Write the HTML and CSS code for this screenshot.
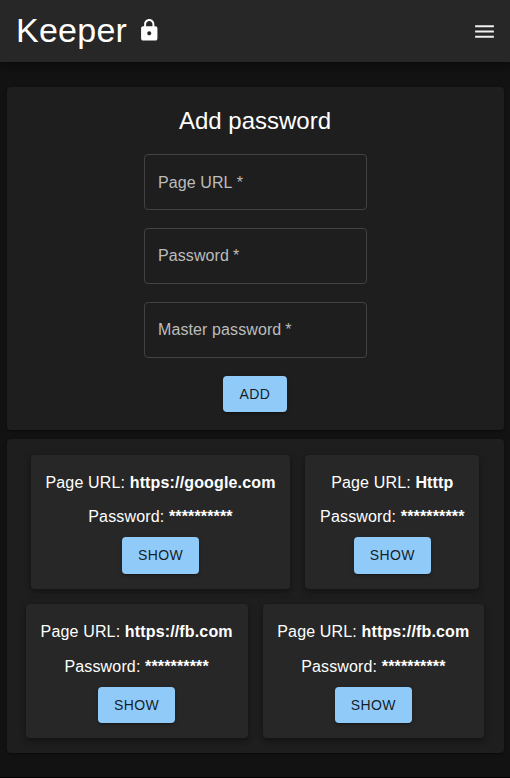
FILE: index.html
```html
<!DOCTYPE html>
<html lang="en">
<head>
<meta charset="utf-8">
<title>Keeper</title>
<link rel="stylesheet" href="styles.css">
</head>
<body>
<header class="bar">
  <h1 class="brand">Keeper</h1>
  <svg class="lock" viewBox="0 0 24 24"><path d="M18 8h-1V6c0-2.760-2.240-5-5-5S7 3.240 7 6v2H6c-1.100 0-2 .9-2 2v10c0 1.100.9 2 2 2h12c1.100 0 2-.9 2-2V10c0-1.100-.9-2-2-2zm-6 9c-1.100 0-2-.9-2-2s.9-2 2-2 2 .9 2 2-.9 2-2 2zm3.100-9H8.900V6c0-1.710 1.390-3.100 3.100-3.100s3.100 1.390 3.100 3.100v2z"/></svg>
  <svg class="menu" viewBox="0 0 24 24"><path d="M3 18h18v-2H3v2zm0-5h18v-2H3v2zm0-7v2h18V6H3z"/></svg>
</header>
<main>
  <section class="panel form">
    <h2 class="heading">Add password</h2>
    <label class="field">Page URL<span class="star">*</span></label>
    <label class="field">Password<span class="star">*</span></label>
    <label class="field">Master password<span class="star">*</span></label>
    <button class="btn">Add</button>
  </section>
  <section class="panel list">
    <article class="card">
      <p class="url">Page URL: <b>https://google.com</b></p>
      <p class="pass">Password: <b>**********</b></p>
      <button class="btn">Show</button>
    </article>
    <article class="card">
      <p class="url">Page URL: <b>Htttp</b></p>
      <p class="pass">Password: <b>**********</b></p>
      <button class="btn">Show</button>
    </article>
    <article class="card">
      <p class="url">Page URL: <b>https://fb.com</b></p>
      <p class="pass">Password: <b>**********</b></p>
      <button class="btn">Show</button>
    </article>
    <article class="card">
      <p class="url">Page URL: <b>https://fb.com</b></p>
      <p class="pass">Password: <b>**********</b></p>
      <button class="btn">Show</button>
    </article>
  </section>
</main>
</body>
</html>
```

FILE: styles.css
```css
* { box-sizing: border-box; }
body {
  margin: 0;
  height: 778px;
  overflow: hidden;
  background: #121212;
  border-bottom: 1px solid #000;
  color: #fff;
  font: 400 16px/24px "Liberation Sans", Arial, sans-serif;
  letter-spacing: 0.15px;
}
h1, h2, p { margin: 0; font-weight: 400; }
.bar {
  display: flex;
  align-items: center;
  height: 62px;
  padding: 0 13px 0 16px;
  background: #272727;
  box-shadow: 0 2px 4px -1px rgba(0,0,0,.2), 0 4px 5px rgba(0,0,0,.14), 0 1px 10px rgba(0,0,0,.12);
}
.brand { margin-bottom: 2px; font-size: 34px; line-height: 42px; letter-spacing: 0.25px; }
.lock { width: 24.500px; height: 24.500px; margin: 0 0 1px 9.500px; fill: #fff; }
.menu { width: 25px; height: 25px; margin-left: auto; fill: #f0f0f0; }
main {
  display: flex;
  flex-direction: column;
  gap: 9px;
  padding: 24.500px 6.500px 0;
}
.panel {
  border-radius: 4px;
  background: #1e1e1e;
  box-shadow: 0 2px 1px -1px rgba(0,0,0,.2), 0 1px 1px rgba(0,0,0,.14), 0 1px 3px rgba(0,0,0,.12);
}
.form {
  display: flex;
  flex-direction: column;
  align-items: center;
  height: 343.500px;
  padding-top: 18px;
}
.heading { margin-bottom: 17.400px; font-size: 24px; line-height: 32px; letter-spacing: 0; }
.field {
  display: flex;
  align-items: center;
  gap: 4px;
  width: 223px;
  height: 56px;
  margin-bottom: 17.900px;
  padding: 1.400px 13.500px 0;
  border: 1px solid #424242;
  border-radius: 4px;
  color: #bcbcbc;
  letter-spacing: 0.1px;
}
.btn {
  min-width: 64px;
  height: 36.500px;
  padding: 6px 16px;
  border: 0;
  border-radius: 4px;
  background: #90caf9;
  color: rgba(0,0,0,.87);
  font: 400 14px/24.500px "Liberation Sans", Arial, sans-serif;
  letter-spacing: 0.4px;
  text-transform: uppercase;
  box-shadow: 0 3px 1px -2px rgba(0,0,0,.2), 0 2px 2px rgba(0,0,0,.14), 0 1px 5px rgba(0,0,0,.12);
}
.list {
  display: flex;
  flex-wrap: wrap;
  justify-content: center;
  align-content: flex-start;
  gap: 15.500px 15px;
  height: 313.500px;
  padding-top: 15.500px;
}
.card {
  display: flex;
  flex-direction: column;
  align-items: center;
  height: 134px;
  padding: 16px 14.800px 0;
  border-radius: 4px;
  background: #272727;
  box-shadow: 0 2px 4px -1px rgba(0,0,0,.2), 0 4px 5px rgba(0,0,0,.14), 0 1px 10px rgba(0,0,0,.12);
}
.url { margin-bottom: 10.600px; }
.pass { margin-bottom: 8px; }
```
